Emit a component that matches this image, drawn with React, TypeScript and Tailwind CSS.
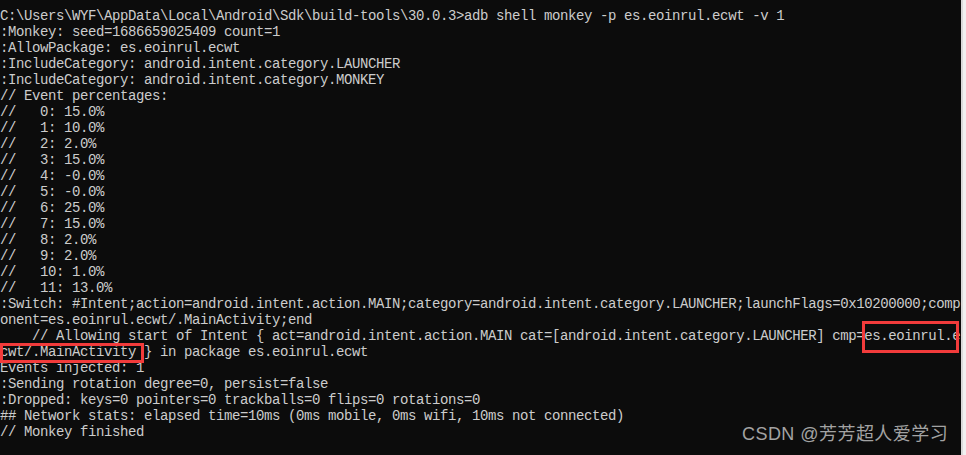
const lines = [
  'C:\\Users\\WYF\\AppData\\Local\\Android\\Sdk\\build-tools\\30.0.3>adb shell monkey -p es.eoinrul.ecwt -v 1',
  ':Monkey: seed=1686659025409 count=1',
  ':AllowPackage: es.eoinrul.ecwt',
  ':IncludeCategory: android.intent.category.LAUNCHER',
  ':IncludeCategory: android.intent.category.MONKEY',
  '// Event percentages:',
  '//   0: 15.0%',
  '//   1: 10.0%',
  '//   2: 2.0%',
  '//   3: 15.0%',
  '//   4: -0.0%',
  '//   5: -0.0%',
  '//   6: 25.0%',
  '//   7: 15.0%',
  '//   8: 2.0%',
  '//   9: 2.0%',
  '//   10: 1.0%',
  '//   11: 13.0%',
  ':Switch: #Intent;action=android.intent.action.MAIN;category=android.intent.category.LAUNCHER;launchFlags=0x10200000;comp',
  'onent=es.eoinrul.ecwt/.MainActivity;end',
  '    // Allowing start of Intent { act=android.intent.action.MAIN cat=[android.intent.category.LAUNCHER] cmp=es.eoinrul.e',
  'cwt/.MainActivity } in package es.eoinrul.ecwt',
  'Events injected: 1',
  ':Sending rotation degree=0, persist=false',
  ':Dropped: keys=0 pointers=0 trackballs=0 flips=0 rotations=0',
  '## Network stats: elapsed time=10ms (0ms mobile, 0ms wifi, 10ms not connected)',
  '// Monkey finished',
];

export default function App() {
  return (
    <div className="flex h-[455px] w-[966px] overflow-hidden">
      <div className="relative h-full w-[961px] bg-[#0c0c0c] pt-[8px]">
        <pre className="m-0 font-['Liberation_Mono',monospace] text-[14px] leading-[16px] tracking-[-0.4px] text-[#cccccc]">
          {lines.map((l, i) => (
            <div key={i} className="h-[16px] whitespace-pre">
              {l}
            </div>
          ))}
        </pre>

        {/* highlight boxes */}
        <div className="absolute left-[862px] top-[321px] h-[32px] w-[97px] border-[3px] border-[#f23b3b]" />
        <div className="absolute left-0 top-[343px] h-[20px] w-[144px] border-[3px] border-[#f23b3b]" />

        <div className="absolute left-[742px] top-[424px] whitespace-nowrap font-['Liberation_Sans','Noto_Sans_CJK_SC',sans-serif] text-[18px] leading-[20px] tracking-[0.45px] text-[#a3a3a3]">
          CSDN @芳芳超人爱学习
        </div>
      </div>
      <div className="h-full w-[2px] bg-[#dadada]" />
      <div className="h-full flex-1 bg-[#f0f0f0]" />
    </div>
  );
}
